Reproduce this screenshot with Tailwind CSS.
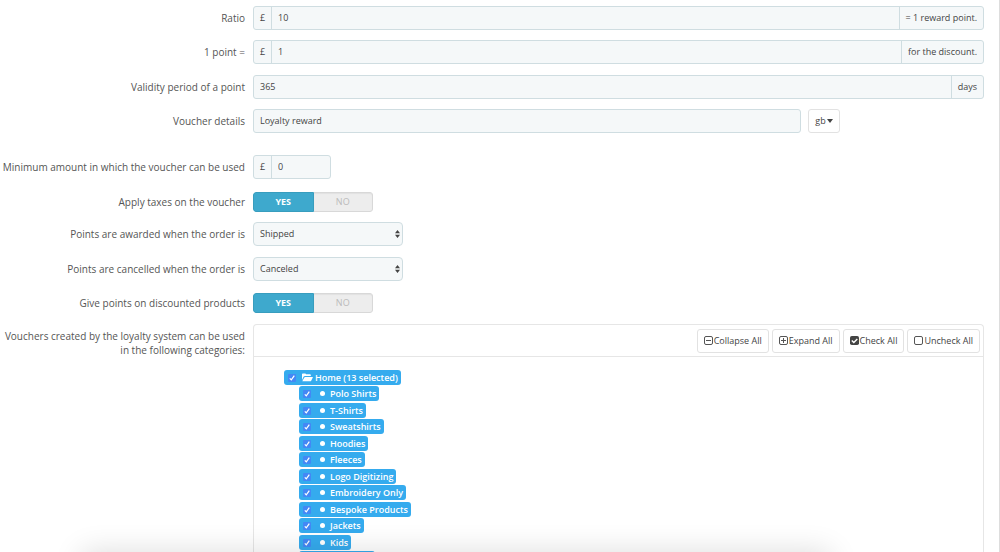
<!DOCTYPE html>
<html lang="en">
<head>
<meta charset="utf-8">
<title>Loyalty settings</title>
<script src="https://cdn.jsdelivr.net/npm/@tailwindcss/browser@4"></script>
</head>
<body class="relative h-screen overflow-hidden bg-white font-['Open_Sans',sans-serif] text-[9px] text-[#444]">
<form class="flex h-full flex-col border-r border-[#ddd] pt-[6px] pr-[15px]">

  <div class="flex h-6 shrink-0 items-center gap-2">
    <label for="ratio" class="w-[245px] shrink-0 text-right text-[10px] text-[#555]">Ratio</label>
    <div class="flex h-full flex-1 overflow-hidden rounded-[3px] border border-[#cfdde1] bg-[#f5f8f9]">
      <span class="flex w-[18px] items-center justify-center border-r border-[#cfdde1]">£</span>
      <input id="ratio" value="10" class="min-w-0 flex-1 px-[6px] outline-none">
      <span class="flex items-center border-l border-[#cfdde1] px-[6px]">= 1 reward point.</span>
    </div>
  </div>

  <div class="mt-[10px] flex h-6 shrink-0 items-center gap-2">
    <label for="point" class="w-[245px] shrink-0 text-right text-[10px] text-[#555]">1 point =</label>
    <div class="flex h-full flex-1 overflow-hidden rounded-[3px] border border-[#cfdde1] bg-[#f5f8f9]">
      <span class="flex w-[18px] items-center justify-center border-r border-[#cfdde1]">£</span>
      <input id="point" value="1" class="min-w-0 flex-1 px-[6px] outline-none">
      <span class="flex items-center border-l border-[#cfdde1] px-[6px]">for the discount.</span>
    </div>
  </div>

  <div class="mt-[11px] flex h-6 shrink-0 items-center gap-2">
    <label for="validity" class="w-[245px] shrink-0 text-right text-[10px] text-[#555]">Validity period of a point</label>
    <div class="flex h-full flex-1 overflow-hidden rounded-[3px] border border-[#cfdde1] bg-[#f5f8f9]">
      <input id="validity" value="365" class="min-w-0 flex-1 px-[6px] outline-none">
      <span class="flex items-center border-l border-[#cfdde1] px-[6px]">days</span>
    </div>
  </div>

  <div class="mt-[10px] flex h-6 shrink-0 items-center gap-2">
    <label for="details" class="w-[245px] shrink-0 text-right text-[10px] text-[#555]">Voucher details</label>
    <div class="flex h-full flex-1 gap-[7px]">
      <input id="details" value="Loyalty reward" class="w-3/4 rounded-[3px] border border-[#cfdde1] bg-[#f5f8f9] px-[6px] outline-none">
      <button type="button" class="flex items-center gap-px rounded-[3px] border border-[#e2e2e2] bg-white px-[6px]">gb
        <svg class="h-1 w-[6px]" viewBox="0 0 6 4" fill="#444"><path d="M0 0h6L3 4z"/></svg>
      </button>
    </div>
  </div>

  <div class="mt-[22px] flex h-6 shrink-0 items-center gap-2">
    <label for="minimum" class="w-[245px] shrink-0 text-right text-[10px] text-[#555]">Minimum amount in which the voucher can be used</label>
    <div class="flex h-full w-[78px] overflow-hidden rounded-[3px] border border-[#cfdde1] bg-[#f5f8f9]">
      <span class="flex w-[18px] items-center justify-center border-r border-[#cfdde1]">£</span>
      <input id="minimum" value="0" class="min-w-0 flex-1 px-[6px] outline-none">
    </div>
  </div>

  <div class="mt-[13px] flex h-5 shrink-0 items-center gap-2" role="radiogroup" aria-labelledby="taxes">
    <span id="taxes" class="w-[245px] shrink-0 text-right text-[10px] text-[#555]">Apply taxes on the voucher</span>
    <div class="flex h-full w-[120px] overflow-hidden rounded-[3px]">
      <label class="flex flex-1 items-center justify-center rounded-l-[3px] border border-[#389dbe] bg-[#3ea9cd] font-bold text-white"><input type="radio" name="taxes" checked class="sr-only">YES</label>
      <label class="flex flex-1 items-center justify-center rounded-r-[3px] border border-l-0 border-[#d8d8d8] bg-[#ededed] text-[#bbb] inset-shadow-xs"><input type="radio" name="taxes" class="sr-only">NO</label>
    </div>
  </div>

  <div class="mt-[10px] flex h-6 shrink-0 items-center gap-2">
    <label for="awarded" class="w-[245px] shrink-0 text-right text-[10px] text-[#555]">Points are awarded when the order is</label>
    <div class="relative h-full w-[150px]">
      <select id="awarded" class="h-full w-full appearance-none rounded-[4px] border border-[#cfdde1] bg-[#f5f8f9] px-[6px] outline-none"><option>Shipped</option></select>
      <svg class="pointer-events-none absolute top-2 right-[3px] h-2 w-[5px]" viewBox="0 0 5 8" fill="#444"><path d="M0 3.3L2.5 0 5 3.3zM0 4.7h5L2.5 8z"/></svg>
    </div>
  </div>

  <div class="mt-[11px] flex h-6 shrink-0 items-center gap-2">
    <label for="cancelled" class="w-[245px] shrink-0 text-right text-[10px] text-[#555]">Points are cancelled when the order is</label>
    <div class="relative h-full w-[150px]">
      <select id="cancelled" class="h-full w-full appearance-none rounded-[4px] border border-[#cfdde1] bg-[#f5f8f9] px-[6px] outline-none"><option>Canceled</option></select>
      <svg class="pointer-events-none absolute top-2 right-[3px] h-2 w-[5px]" viewBox="0 0 5 8" fill="#444"><path d="M0 3.3L2.5 0 5 3.3zM0 4.7h5L2.5 8z"/></svg>
    </div>
  </div>

  <div class="mt-[12px] flex h-5 shrink-0 items-center gap-2" role="radiogroup" aria-labelledby="discounted">
    <span id="discounted" class="w-[245px] shrink-0 text-right text-[10px] text-[#555]">Give points on discounted products</span>
    <div class="flex h-full w-[120px] overflow-hidden rounded-[3px]">
      <label class="flex flex-1 items-center justify-center rounded-l-[3px] border border-[#389dbe] bg-[#3ea9cd] font-bold text-white"><input type="radio" name="discounted" checked class="sr-only">YES</label>
      <label class="flex flex-1 items-center justify-center rounded-r-[3px] border border-l-0 border-[#d8d8d8] bg-[#ededed] text-[#bbb] inset-shadow-xs"><input type="radio" name="discounted" class="sr-only">NO</label>
    </div>
  </div>

  <div class="mt-[11px] flex min-h-0 flex-1 gap-2">
    <div id="categories" class="w-[245px] shrink-0 pt-[5px] text-right text-[10px] leading-[14px] text-[#555]">Vouchers created by the loyalty system can be used<br>in the following categories:</div>
    <section aria-labelledby="categories" class="flex-1 overflow-hidden rounded-t-[4px] border border-b-0 border-[#e6e6e6]">
      <header class="flex h-8 items-center justify-end gap-[3px] border-b border-[#e6e6e6] pr-[3px]">
        <button type="button" class="flex h-6 items-center gap-px rounded-[3px] border border-[#e2e2e2] px-[6px]">
          <svg class="size-[9px]" viewBox="0 0 9 9" fill="none" stroke="#555"><rect x=".5" y=".5" width="8" height="8" rx="1.5"/><path d="M2 4.5h5"/></svg>Collapse All</button>
        <button type="button" class="flex h-6 items-center gap-px rounded-[3px] border border-[#e2e2e2] px-[6px]">
          <svg class="size-[9px]" viewBox="0 0 9 9" fill="none" stroke="#555"><rect x=".5" y=".5" width="8" height="8" rx="1.5"/><path d="M2 4.5h5M4.5 2v5"/></svg>Expand All</button>
        <button type="button" class="flex h-6 items-center gap-px rounded-[3px] border border-[#e2e2e2] px-[6px]">
          <svg class="size-[9px]" viewBox="0 0 9 9" fill="none"><rect width="9" height="9" rx="1.8" fill="#444"/><path d="M1.8 4.5l2 2 3.5-3.6" stroke="#fff" stroke-width="1.4"/></svg>Check All</button>
        <button type="button" class="flex h-6 items-center gap-px rounded-[3px] border border-[#e2e2e2] px-[6px]">
          <svg class="size-[9px]" viewBox="0 0 9 9" fill="none" stroke="#555"><rect x=".5" y=".5" width="8" height="8" rx="1.5"/></svg>Uncheck All</button>
      </header>
      <div id="tree" class="flex flex-col items-start pt-[13px] pl-[30px] font-semibold text-white"></div>
    </section>
  </div>
</form>
<div class="pointer-events-none absolute top-full right-[170px] left-[82px] h-20 shadow-[0_0_30px_rgba(0,0,0,0.14)]"></div>

<script>
const names = ['Home (13 selected)', 'Polo Shirts', 'T-Shirts', 'Sweatshirts', 'Hoodies', 'Fleeces', 'Logo Digitizing', 'Embroidery Only', 'Bespoke Products', 'Jackets', 'Kids', ''];
const folder = '<svg class="mr-[2px] h-[9px] w-[11px]" viewBox="0 0 11 9" fill="#fff"><path d="M0 7V1.2Q0 .4.8.4h2.4q.7 0 .8.9h4q.8 0 .8.8v.9H3q-.8 0-1.3.6zM.3 8.3l2-3.8q.3-.6 1-.6h7.1q.8 0 .4.7L9.2 7.7q-.3.6-1 .6z"/></svg>';
const dot = '<span class="mr-[5px] ml-[3px] size-[5px] rounded-full bg-white"></span>';
document.getElementById('tree').innerHTML = names.map((name, i) => `
  <label class="${i ? 'ml-[15px]' : ''} ${i % 2 ? 'mb-[2px]' : 'mb-px'} ${name ? '' : 'w-[76px]'} flex h-[15px] items-center rounded-[3px] bg-[#35abee] pr-[3px] pl-[4px] whitespace-nowrap">
    <span class="relative mr-[6px] size-2">
      <input type="checkbox" checked class="block size-2 appearance-none rounded-[1px] bg-[#4388f5]">
      <svg class="pointer-events-none absolute inset-0 size-2" viewBox="0 0 8 8" fill="none" stroke="#fff" stroke-width="1.2"><path d="M1.8 4.3l1.5 1.6 3-4.3"/></svg>
    </span>${i ? dot : folder}${name}
  </label>`).join('');
</script>
</body>
</html>
